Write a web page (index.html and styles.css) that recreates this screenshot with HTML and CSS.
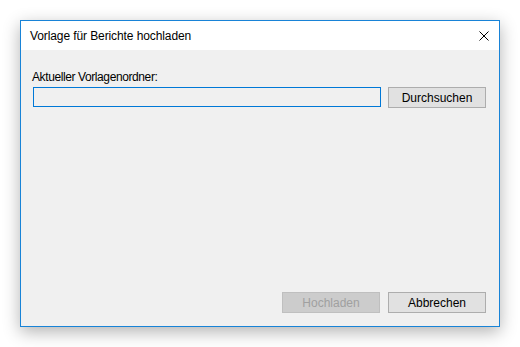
FILE: index.html
```html
<!DOCTYPE html>
<html>
<head>
  <meta charset="UTF-8">
  <title>Vorlage für Berichte hochladen</title>
  <link rel="stylesheet" href="styles.css">
</head>
<body>
  <div class="dialog">
    <div class="titlebar">
      <span class="title">Vorlage für Berichte hochladen</span>
      <svg class="close" width="10" height="10" viewBox="0 0 10 10">
        <path d="M0.5 0.5 L9.5 9.5 M9.5 0.5 L0.5 9.5" stroke="#000" stroke-width="1" fill="none"/>
      </svg>
    </div>

    <div class="content">
      <label class="field-label" for="folder">Aktueller Vorlagenordner:</label>
      <div class="field-row">
        <input type="text" id="folder" class="folder-input">
        <button class="btn">Durchsuchen</button>
      </div>

      <div class="actions">
        <button class="btn" disabled>Hochladen</button>
        <button class="btn">Abbrechen</button>
      </div>
    </div>
  </div>
</body>
</html>
```

FILE: styles.css
```css
:root {
  --accent: #1883d7;
  --window-bg: #f0f0f0;
  --text: #000000;
  --btn-bg: #e1e1e1;
  --btn-border: #adadad;
  --btn-disabled-bg: #cccccc;
  --btn-disabled-border: #bfbfbf;
  --btn-disabled-text: #a0a0a0;
}

* {
  box-sizing: border-box;
  margin: 0;
  padding: 0;
}

body {
  background: #ffffff;
  padding: 20px;
  font-family: 'Liberation Sans', Arial, sans-serif;
  font-size: 12px;
  color: var(--text);
}

.dialog {
  width: 480px;
  height: 307px;
  border: 1px solid var(--accent);
  background: var(--window-bg);
  box-shadow: 0 5px 16px rgba(0, 0, 0, 0.3);
  display: flex;
  flex-direction: column;
}

.titlebar {
  height: 29px;
  background: #ffffff;
  display: flex;
  align-items: center;
  justify-content: space-between;
  padding: 0 10px 0 9px;
}

.title {
  font-size: 12px;
  letter-spacing: -0.1px;
}

.content {
  flex: 1;
  display: flex;
  flex-direction: column;
  padding: 19px 13px 13px 12px;
}

.field-label {
  margin-left: -1px;
  line-height: 16px;
  margin-bottom: 2px;
  letter-spacing: -0.4px;
}

.field-row {
  display: flex;
  gap: 7px;
}

.folder-input {
  width: 348px;
  height: 20px;
  border: 1px solid #0078d7;
  background: var(--window-bg);
  outline: none;
}

.btn {
  width: 98px;
  height: 21px;
  background: var(--btn-bg);
  border: 1px solid var(--btn-border);
  font-family: inherit;
  font-size: 12px;
  color: var(--text);
}

.btn:disabled {
  background: var(--btn-disabled-bg);
  border-color: var(--btn-disabled-border);
  color: var(--btn-disabled-text);
}

.actions {
  margin-top: auto;
  display: flex;
  justify-content: flex-end;
  gap: 8px;
}
```
